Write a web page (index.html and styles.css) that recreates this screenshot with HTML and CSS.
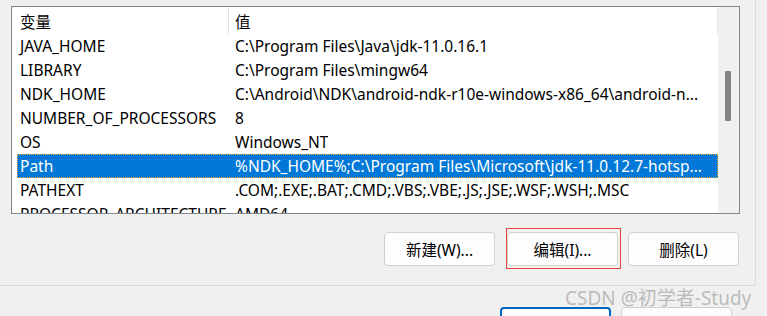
FILE: index.html
```html
<!DOCTYPE html>
<html lang="zh-CN">
<head>
    <meta charset="UTF-8">
    <meta name="viewport" content="width=device-width, initial-scale=1.0">
    <title>系统变量</title>
    <link rel="stylesheet" href="styles.css">
</head>
<body>

<div class="pane">
    <div class="list-box">
        <div class="list">
            <div class="list-head">
                <div class="col-name">变量</div>
                <div class="col-value">值</div>
            </div>
            <div class="row"><div class="col-name">JAVA_HOME</div><div class="col-value">C:\Program Files\Java\jdk-11.0.16.1</div></div>
            <div class="row"><div class="col-name">LIBRARY</div><div class="col-value">C:\Program Files\mingw64</div></div>
            <div class="row"><div class="col-name">NDK_HOME</div><div class="col-value">C:\Android\NDK\android-ndk-r10e-windows-x86_64\android-n...</div></div>
            <div class="row"><div class="col-name">NUMBER_OF_PROCESSORS</div><div class="col-value">8</div></div>
            <div class="row"><div class="col-name">OS</div><div class="col-value">Windows_NT</div></div>
            <div class="row selected"><div class="col-name">Path</div><div class="col-value">%NDK_HOME%;C:\Program Files\Microsoft\jdk-11.0.12.7-hotsp...</div></div>
            <div class="row"><div class="col-name">PATHEXT</div><div class="col-value">.COM;.EXE;.BAT;.CMD;.VBS;.VBE;.JS;.JSE;.WSF;.WSH;.MSC</div></div>
            <div class="row"><div class="col-name">PROCESSOR_ARCHITECTURE</div><div class="col-value">AMD64</div></div>
        </div>
        <div class="scrollbar">
            <div class="thumb"></div>
        </div>
    </div>

    <div class="actions">
        <button class="btn">新建(W)...</button>
        <button class="btn marked">编辑(I)...</button>
        <button class="btn">删除(L)</button>
    </div>
</div>

<div class="footer">
    <button class="btn default"></button>
    <button class="btn"></button>
    <span class="watermark">CSDN @初学者-Study</span>
</div>

</body>
</html>
```

FILE: styles.css
```css
body {
    margin: 0;
    width: 767px;
    height: 316px;
    overflow: hidden;
    background-color: #f0f0f0;
    font-family: "Noto Sans", "Noto Sans CJK SC", sans-serif;
    font-size: 15.5px;
    color: #000;
}
.pane {
    width: 755px;
    height: 279px;
    border-right: 1px solid #dadada;
    border-bottom: 1px solid #d6d6d6;
    padding-top: 6px;
}
.list-box {
    margin-left: 11px;
    width: 727px;
    height: 206px;
    border: 1px solid #82878f;
    display: flex;
    background-color: #fff;
    overflow: hidden;
}
.list {
    width: 706px;
    padding-left: 5px;
    box-sizing: border-box;
}
.list-head {
    display: flex;
    height: 27px;
}
.list-head .col-name,
.list-head .col-value {
    border-right: 1px solid #e5e5e5;
    height: 26px;
    margin-top: 1px;
    display: flex;
    align-items: center;
}
.list-head .col-value {
    flex: 1;
}
.col-name {
    width: 212px;
    padding-left: 3px;
    box-sizing: border-box;
    flex-shrink: 0;
    white-space: nowrap;
}
.col-value {
    padding-left: 6px;
    white-space: nowrap;
    overflow: hidden;
}
.row {
    display: flex;
    height: 24px;
    align-items: center;
    white-space: nowrap;
}
.row.selected {
    background-color: #0078d7;
    color: #fff;
    outline: 1px dotted #f5a33c;
    outline-offset: -1px;
}
.scrollbar {
    width: 21px;
    background-color: #f0f0f0;
}
.thumb {
    margin: 64px 0 0 7px;
    width: 6px;
    height: 50px;
    border-radius: 1px;
    background-color: #858585;
}
.actions {
    display: flex;
    justify-content: flex-end;
    margin-top: 18px;
    padding-right: 16px;
    gap: 12px;
}
.btn {
    width: 111px;
    height: 34px;
    border: 1px solid #d0d0d0;
    border-radius: 4px;
    background-color: #fdfdfd;
    font-family: inherit;
    font-size: 15.5px;
    color: #000;
    padding: 0;
}
.actions .btn:last-child {
    margin-left: -2px;
}
.marked {
    position: relative;
}
.marked::after {
    content: "";
    position: absolute;
    left: -2px;
    top: -5px;
    right: -4px;
    bottom: -4px;
    border: 1px solid #e8413b;
}
.footer {
    position: relative;
    height: 30px;
    overflow: hidden;
    display: flex;
    padding-left: 500px;
    padding-top: 21px;
    gap: 10px;
    box-sizing: border-box;
}
.footer .btn {
    flex-shrink: 0;
}
.footer .default {
    border: 2px solid #0067c0;
}
.watermark {
    position: absolute;
    left: 565px;
    top: -3px;
    font-size: 19px;
    color: rgba(150, 150, 150, 0.6);
    white-space: nowrap;
}
```
